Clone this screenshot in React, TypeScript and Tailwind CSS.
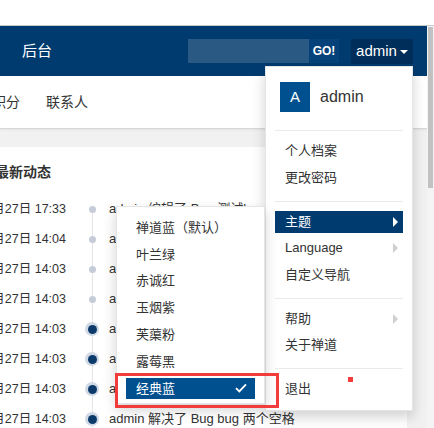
import { memo } from "react";

const font = "font-['Liberation_Sans','Noto_Sans_CJK_SC',sans-serif]";

const feed = [
	{ time: "10月27日 17:33", text: "admin 编辑了 Bug 测试bug", active: false },
	{ time: "10月27日 14:04", text: "admin 创建了 Bug 测试bug", active: false },
	{ time: "10月27日 14:03", text: "admin 关闭了 Bug 按钮错位", active: false },
	{ time: "10月27日 14:03", text: "admin 解决了 Bug 按钮错位", active: false },
	{ time: "10月27日 14:03", text: "admin 关闭了 Bug 页面报错", active: true },
	{ time: "10月27日 14:03", text: "admin 解决了 Bug 页面报错", active: true },
	{ time: "10月27日 14:03", text: "admin 关闭了 Bug bug 两个空格", active: true },
	{ time: "10月27日 14:03", text: "admin 解决了 Bug bug 两个空格", active: true },
];

const themes = ["禅道蓝（默认）", "叶兰绿", "赤诚红", "玉烟紫", "芙蕖粉", "露莓黑"];

const menuGroups = [
	[{ label: "个人档案" }, { label: "更改密码" }],
	[
		{ label: "主题", active: true, sub: true },
		{ label: "Language", sub: true },
		{ label: "自定义导航" },
	],
	[{ label: "帮助", sub: true }, { label: "关于禅道" }],
	[{ label: "退出" }],
];

const Caret = ({ white }: { white?: boolean }) => (
	<span
		className={`h-0 w-0 border-y-[5px] border-l-[5px] border-y-transparent ${
			white ? "border-l-white" : "border-l-[#cfcfcf]"
		}`}
	/>
);

const App = () => {
	return (
		<div className={`relative flex h-[428px] w-[434px] flex-col overflow-hidden bg-white text-[#333] ${font}`}>
			<div className="h-[26px] shrink-0 border-b border-[#c9c9c9] bg-white" />

			<div className="flex flex-1">
				<main className="flex w-[427px] flex-col overflow-hidden bg-[#f1f1f1]">
					<nav className="flex h-[50px] shrink-0 items-center bg-[#003b6f] pl-[22px] pr-[14px] text-white">
						<span className="text-[15px]">后台</span>
						<div className="ml-auto flex h-[24px] items-stretch">
							<div className="w-[121px] bg-[#2a5a84]" />
							<div className="flex w-[30px] items-center justify-center bg-[#06427a] text-[12px] font-bold">
								GO!
							</div>
						</div>
						<div className="ml-[12px] flex h-[25px] w-[62px] items-center justify-center gap-[3px] bg-[#002e5a] text-[15px]">
							<span>admin</span>
							<span className="mt-[1px] h-0 w-0 border-x-[4px] border-t-[4px] border-x-transparent border-t-white" />
						</div>
					</nav>

					<div className="flex h-[53px] shrink-0 items-center gap-[26px] border-b border-[#d8d8d8] bg-white text-[14px] shadow-[0_1px_2px_rgba(0,0,0,0.06)]">
						<span className="-ml-[8px]">积分</span>
						<span>联系人</span>
					</div>

					<section className="mr-[20px] mt-[18px] flex-1 bg-white">
						<h2 className="-ml-[5px] pt-[15px] text-[14px] font-bold leading-[20px]">最新动态</h2>
						<div className="relative mt-[12px]">
							<div className="absolute bottom-0 left-[92px] top-[15px] w-px bg-[#e5e5e5]" />
							{feed.map((row, i) => (
								<div key={i} className="relative flex h-[30px] items-center text-[13px]">
									<div className="flex w-[66px] shrink-0 justify-end whitespace-nowrap text-[12.5px]">{row.time}</div>
									<div className="ml-[14px] flex w-[24px] shrink-0 items-center justify-center">
										{row.active ? (
											<span className="flex h-[14px] w-[14px] items-center justify-center rounded-full bg-[#d0d9e4]">
												<span className="h-[9px] w-[9px] rounded-full bg-[#0b3a6b]" />
											</span>
										) : (
											<span className="h-[7px] w-[7px] rounded-full bg-[#c5ccd8]" />
										)}
									</div>
									<span className="ml-[5px] whitespace-nowrap">{row.text}</span>
								</div>
							))}
						</div>
					</section>
				</main>

				<div className="w-[7px] bg-[#f4f4f4] pt-px">
					<div className="ml-px h-[161px] w-[5px] bg-[#c1c1c1]" />
				</div>
			</div>

			{/* user dropdown */}
			<div className="absolute left-[265px] top-[66px] w-[148px] border border-black/10 bg-white pb-[10px] pt-[15px] text-[13px] shadow-[0_6px_12px_rgba(0,0,0,0.18)]">
				<div className="flex items-center gap-[10px] px-[14px]">
					<span className="flex h-[30px] w-[30px] items-center justify-center bg-[#00508f] text-[15px] text-white">A</span>
					<span className="text-[16px]">admin</span>
				</div>
				{menuGroups.map((group, gi) => (
					<div key={gi}>
						<div className={`mx-[9px] h-px bg-[#ebebeb] ${gi === 0 ? "mt-[18px]" : "mt-[12px]"}`} />
						<div className="flex flex-col gap-[4.5px] px-[9px] pt-[9px]">
							{group.map((item) => (
								<div
									key={item.label}
									className={`flex h-[22px] items-center justify-between pl-[10px] pr-[5px] ${
										"active" in item && item.active ? "bg-[#003b6f] text-white" : ""
									}`}
								>
									<span>{item.label}</span>
									{"sub" in item && item.sub ? <Caret white={"active" in item && item.active} /> : null}
								</div>
							))}
						</div>
					</div>
				))}
			</div>

			{/* theme submenu */}
			<div className="absolute left-[116px] top-[206px] h-[198px] w-[149px] border border-black/10 bg-white pt-[10px] text-[13px] shadow-[0_6px_12px_rgba(0,0,0,0.18)]">
				<div className="flex flex-col gap-[5.8px] px-[9px]">
					{themes.map((t) => (
						<div key={t} className="flex h-[21px] items-center pl-[10px]">
							{t}
						</div>
					))}
					<div className="flex h-[21px] items-center justify-between bg-[#00508f] pl-[10px] pr-[8px] text-white">
						<span>经典蓝</span>
						<svg width="12" height="10" viewBox="0 0 12 10" fill="none">
							<path d="M1 5.2 4.3 8.4 11 1.4" stroke="white" strokeWidth="1.8" />
						</svg>
					</div>
				</div>
			</div>

			{/* annotation marks */}
			<div className="absolute left-[115px] top-[373px] h-[35px] w-[164px] border-[3px] border-[#f23b3b]" />
			<div className="absolute left-[348px] top-[377px] h-[5px] w-[5px] bg-[#f23b3b]" />
		</div>
	);
};

export default memo(App);
